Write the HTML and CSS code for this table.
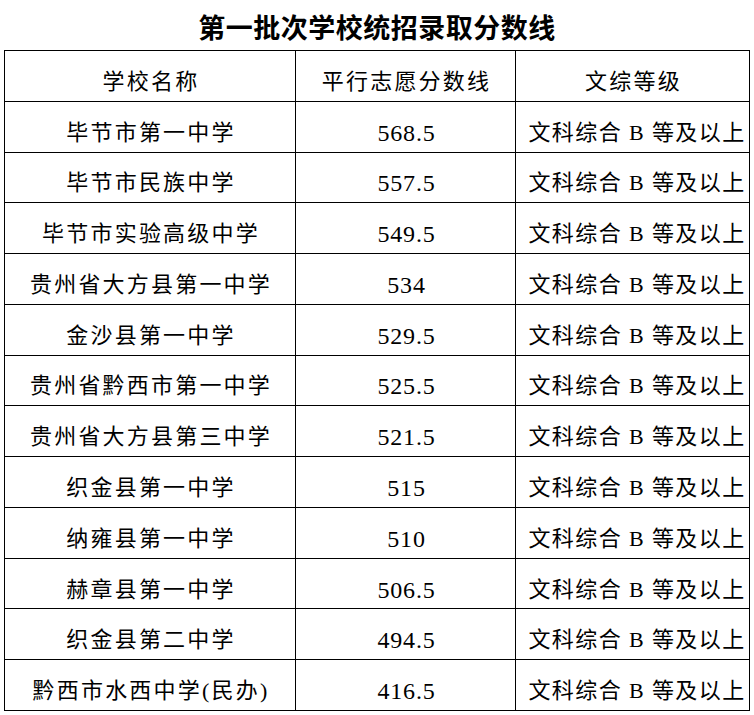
FILE: index.html
```html
<!DOCTYPE html>
<html lang="zh-CN">
<head>
<meta charset="utf-8">
<title>第一批次学校统招录取分数线</title>
<link rel="stylesheet" href="styles.css">
</head>
<body>
<h1 class="title">第一批次学校统招录取分数线</h1>
<div class="grid">
  <div class="cell">学校名称</div><div class="cell">平行志愿分数线</div><div class="cell">文综等级</div>
  <div class="cell">毕节市第一中学</div><div class="cell num">568.5</div><div class="cell lvl">文科综合 B 等及以上</div>
  <div class="cell">毕节市民族中学</div><div class="cell num">557.5</div><div class="cell lvl">文科综合 B 等及以上</div>
  <div class="cell">毕节市实验高级中学</div><div class="cell num">549.5</div><div class="cell lvl">文科综合 B 等及以上</div>
  <div class="cell">贵州省大方县第一中学</div><div class="cell num">534</div><div class="cell lvl">文科综合 B 等及以上</div>
  <div class="cell">金沙县第一中学</div><div class="cell num">529.5</div><div class="cell lvl">文科综合 B 等及以上</div>
  <div class="cell">贵州省黔西市第一中学</div><div class="cell num">525.5</div><div class="cell lvl">文科综合 B 等及以上</div>
  <div class="cell">贵州省大方县第三中学</div><div class="cell num">521.5</div><div class="cell lvl">文科综合 B 等及以上</div>
  <div class="cell">织金县第一中学</div><div class="cell num">515</div><div class="cell lvl">文科综合 B 等及以上</div>
  <div class="cell">纳雍县第一中学</div><div class="cell num">510</div><div class="cell lvl">文科综合 B 等及以上</div>
  <div class="cell">赫章县第一中学</div><div class="cell num">506.5</div><div class="cell lvl">文科综合 B 等及以上</div>
  <div class="cell">织金县第二中学</div><div class="cell num">494.5</div><div class="cell lvl">文科综合 B 等及以上</div>
  <div class="cell">黔西市水西中学(民办)</div><div class="cell num">416.5</div><div class="cell lvl">文科综合 B 等及以上</div>
</div>
</body>
</html>
```
FILE: styles.css
```css
html, body {
  margin: 0;
  padding: 0;
  background: #ffffff;
}
body {
  width: 754px;
  height: 715px;
  overflow: hidden;
  color: #000;
}
.title {
  margin: 0;
  height: 50px;
  display: flex;
  align-items: center;
  justify-content: center;
  padding-top: 2px;
  box-sizing: border-box;
  font-family: "Noto Sans CJK SC", sans-serif;
  font-weight: 700;
  font-size: 27px;
  letter-spacing: 0.5px;
  line-height: 1;
}
.grid {
  margin-left: 4px;
  width: 746px;
  height: 661px;
  box-sizing: border-box;
  padding: 1px;
  background: #000;
  display: grid;
  grid-template-columns: 290px 219px 233px;
  grid-template-rows: repeat(13, 1fr);
  gap: 1px;
}
.cell {
  background: #fff;
  display: flex;
  align-items: center;
  justify-content: center;
  padding-top: 12px;
  padding-left: 2px;
  box-sizing: border-box;
  font-family: "Liberation Serif", "Noto Sans CJK SC", serif;
  font-size: 22px;
  font-weight: 400;
  letter-spacing: 2.2px;
  line-height: 1;
  white-space: nowrap;
}
.num {
  font-family: "Liberation Serif", "Times New Roman", serif;
  font-size: 24px;
  letter-spacing: 0.8px;
}
.lvl {
  letter-spacing: 1.4px;
  padding-left: 9px;
}
```
